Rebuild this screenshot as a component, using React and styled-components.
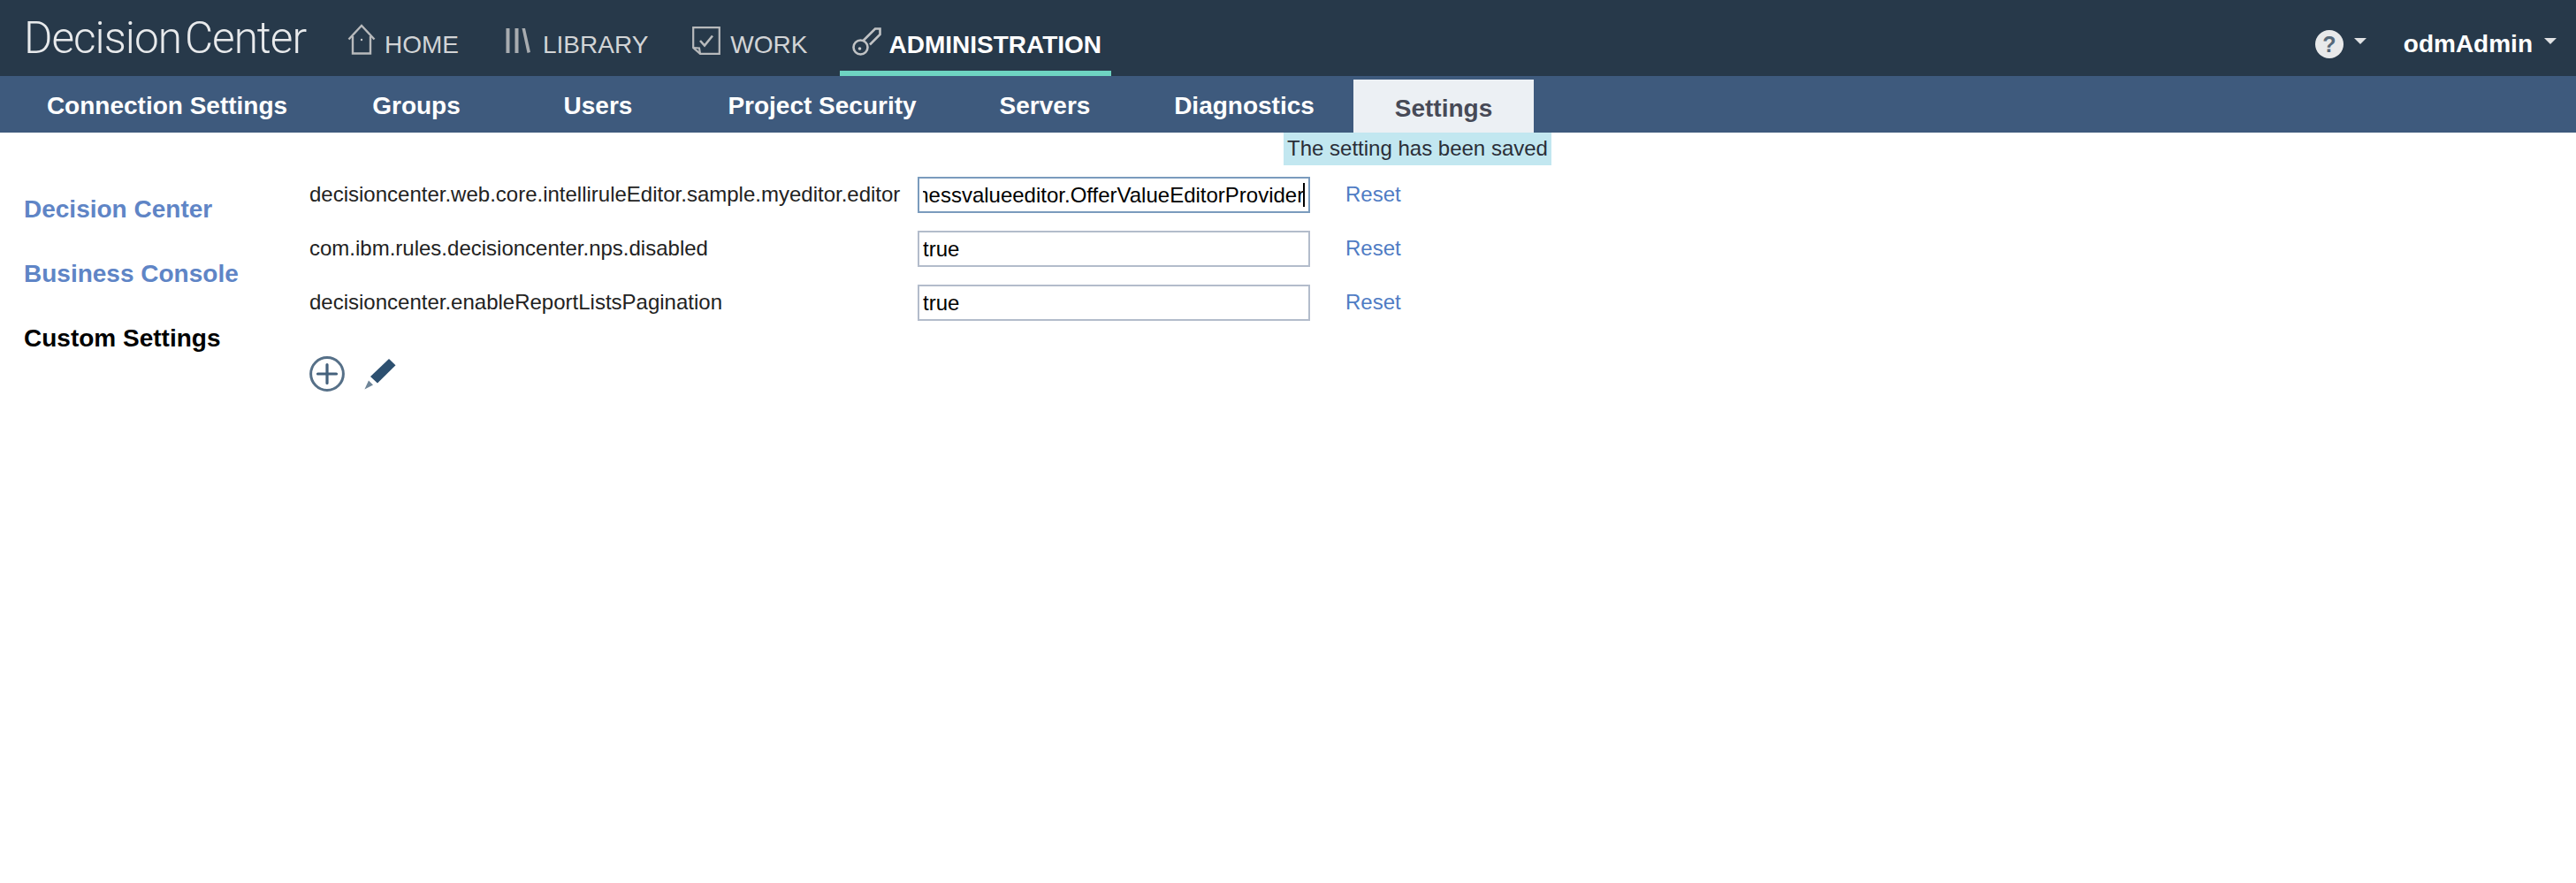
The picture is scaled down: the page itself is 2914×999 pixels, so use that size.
import React, { useEffect, useRef } from "react";
import styled, { createGlobalStyle } from "styled-components";

const Global = createGlobalStyle`
  html, body { margin: 0; padding: 0; background: #fff; }
  body { font-family: "Liberation Sans", Arial, sans-serif; color: #222; }
`;

const Page = styled.div`
  min-height: 999px;
  display: flex;
  flex-direction: column;
`;

const TopBar = styled.header`
  height: 86px;
  background: #27394a;
  display: flex;
  align-items: stretch;
  padding-left: 27px;
  box-sizing: border-box;
`;

const Logo = styled.div`
  width: 352px;
  font-family: "Roboto", "Liberation Sans", sans-serif;
  font-weight: 300;
  font-size: 49.5px;
  letter-spacing: -1px;
  word-spacing: -7px;
  color: #e8eaec;
  line-height: 86px;
  white-space: nowrap;
`;

const MainNav = styled.nav`
  display: flex;
  align-items: stretch;
`;

const NavItem = styled.a`
  display: flex;
  align-items: center;
  gap: ${(p) => p.$gap}px;
  padding: 6px ${(p) => (p.$active ? 11 : 14)}px 0 14px;
  margin-right: ${(p) => p.$mr}px;
  font-size: 28px;
  font-weight: ${(p) => (p.$active ? 700 : 400)};
  color: ${(p) => (p.$active ? "#fff" : "#d2d4d6")};
  border-bottom: 6px solid ${(p) => (p.$active ? "#6ed4c2" : "transparent")};
  box-sizing: border-box;
  white-space: nowrap;
`;

const NavLabel = styled.span`
  position: relative;
  top: 8px;
`;

const IconSvg = styled.svg`
  display: block;
  flex: none;
  position: relative;
  top: ${(p) => p.$top || 0}px;
`;

const UserArea = styled.div`
  margin-left: auto;
  display: flex;
  align-items: center;
  padding: 13px 22px 0 0;
`;

const HelpBadge = styled.span`
  width: 32px;
  height: 32px;
  border-radius: 50%;
  background: #e8e9ea;
  color: #566879;
  font-weight: 700;
  font-size: 25px;
  line-height: 32px;
  text-align: center;
`;

const Caret = styled.span`
  width: 0;
  height: 0;
  margin-left: ${(p) => p.$ml}px;
  border-left: 7px solid transparent;
  border-right: 7px solid transparent;
  border-top: 7px solid #e0e2e4;
  position: relative;
  top: -3px;
`;

const UserName = styled.span`
  margin-left: 42px;
  font-size: 28px;
  font-weight: 700;
  color: #fff;
`;

const SubBar = styled.nav`
  height: 64px;
  background: #3e5a7d;
  display: flex;
  padding-left: 5px;
`;

const Tab = styled.a`
  width: ${(p) => p.$w}px;
  margin-left: ${(p) => p.$ml || 0}px;
  margin-top: ${(p) => (p.$active ? 4 : 0)}px;
  padding-top: ${(p) => (p.$active ? 5 : 4)}px;
  background: ${(p) => (p.$active ? "#ecf0f4" : "transparent")};
  color: ${(p) => (p.$active ? "#474a57" : "#fff")};
  font-size: 28px;
  font-weight: 700;
  text-align: center;
  line-height: ${(p) => (p.$active ? 55 : 60)}px;
  white-space: nowrap;
  height: ${(p) => (p.$active ? 55 : 60)}px;
`;

const Content = styled.main`
  position: relative;
  display: flex;
`;

const Toast = styled.div`
  position: absolute;
  left: 1452px;
  top: 0;
  width: 303px;
  height: 37px;
  background: #c2e7f0;
  color: #2a2e38;
  font-size: 24px;
  line-height: 36px;
  text-align: center;
  white-space: nowrap;
`;

const SideNav = styled.aside`
  width: 350px;
  flex: none;
  padding: 71px 0 0 27px;
  box-sizing: border-box;
  display: flex;
  flex-direction: column;
  gap: 41px;
`;

const SideLink = styled.a`
  font-size: 28px;
  font-weight: 700;
  line-height: 32px;
  color: ${(p) => (p.$active ? "#000" : "#5f85c6")};
`;

const Panel = styled.section`
  padding-top: 50px;
`;

const SettingsGrid = styled.div`
  display: grid;
  grid-template-columns: 688px 444px auto;
  row-gap: 20px;
  align-items: center;
`;

const SettingName = styled.label`
  font-size: 24px;
  color: #222;
  white-space: nowrap;
  position: relative;
  top: -1px;
`;

const ValueWrap = styled.div`
  position: relative;
  width: 444px;
  height: 41px;
`;

const ValueInput = styled.input`
  width: 100%;
  height: 100%;
  box-sizing: border-box;
  border: 2px solid ${(p) => (p.$focused ? "#7a9bbd" : "#b3bccb")};
  outline: none;
  border-radius: 0;
  padding: 0 5px 0 4px;
  margin: 0;
  font-family: "Liberation Sans", Arial, sans-serif;
  font-size: 24px;
  color: #000;
  background: #fff;
  caret-color: transparent;
`;

const CaretMark = styled.span`
  position: absolute;
  left: 436px;
  top: 7px;
  width: 2px;
  height: 27px;
  background: #000;
`;

const ResetLink = styled.a`
  margin-left: 40px;
  font-size: 24px;
  color: #4f7cc4;
  position: relative;
  top: -1px;
`;

const Actions = styled.div`
  display: flex;
  align-items: center;
  gap: 22px;
  margin-top: 40px;
`;

const HomeIcon = () => (
  <IconSvg $top={1} width="32" height="35" viewBox="0 0 32 35" fill="none" stroke="#b8babc" strokeWidth="2.4">
    <path d="M1.5 17.5 16 2l14.5 15.5" />
    <path d="M6 14v19.5h20V14" />
    <circle cx="16" cy="18" r="1.2" fill="#c4c6c8" stroke="none" />
  </IconSvg>
);

const LibraryIcon = () => (
  <IconSvg $top={3} width="28" height="28" viewBox="0 0 28 28" fill="#a8acb0">
    <rect x="0.5" y="0" width="4" height="28" />
    <rect x="10.5" y="0" width="4" height="28" />
    <path d="M18.5 0h3.5l6 27-3.5 1z" />
  </IconSvg>
);

const WorkIcon = () => (
  <IconSvg $top={3} width="32" height="32" viewBox="0 0 32 32" fill="none" stroke="#b8babc" strokeWidth="2.2">
    <path d="M1.2 1.2h29.6v29.6H9L1.2 24z" />
    <path d="M1.2 24 8 24.5 9 30.8" />
    <path d="M9 16l5 5.5 9-11" strokeWidth="2.6" />
  </IconSvg>
);

const KeyIcon = () => (
  <IconSvg $top={3} width="33" height="33" viewBox="0 0 33 33" fill="none" stroke="#c0c2c4" strokeWidth="2.6">
    <path d="M12 16.5 26 2.5H31.5V9L20 20.5" />
    <circle cx="9.5" cy="23.5" r="8" />
    <circle cx="8.5" cy="25" r="1.8" fill="#c8cacc" stroke="none" />
  </IconSvg>
);

const PlusIcon = () => (
  <IconSvg width="40" height="40" viewBox="0 0 40 40" fill="none">
    <circle cx="20" cy="20" r="18.4" stroke="#567088" strokeWidth="3" />
    <path d="M20 9.5v21M9.5 20h21" stroke="#44617c" strokeWidth="3.2" strokeLinecap="round" />
  </IconSvg>
);

const PencilIcon = () => (
  <IconSvg width="36" height="36" viewBox="0 0 36 36">
    <path d="M28 1l7.5 7.2L15 28.5 7 21z" fill="#2d5070" />
    <path d="M5 25.5l5 5L.4 35.6z" fill="#6f8598" />
  </IconSvg>
);

const longValue = "decisioncenter.web.core.businessvalueeditor.OfferValueEditorProvider";

const rows = [
  { name: "decisioncenter.web.core.intelliruleEditor.sample.myeditor.editor", value: longValue, focused: true },
  { name: "com.ibm.rules.decisioncenter.nps.disabled", value: "true" },
  { name: "decisioncenter.enableReportListsPagination", value: "true" },
];

const tabs = [
  { label: "Connection Settings", w: 368 },
  { label: "Groups", w: 196 },
  { label: "Users", w: 215 },
  { label: "Project Security", w: 292 },
  { label: "Servers", w: 212 },
  { label: "Diagnostics", w: 239 },
  { label: "Settings", w: 204, ml: 4, active: true },
];

export default function App() {
  const inputRef = useRef(null);
  useEffect(() => {
    if (inputRef.current) inputRef.current.scrollLeft = inputRef.current.scrollWidth;
  }, []);
  return (
    <Page>
      <Global />
      <TopBar>
        <Logo>Decision Center</Logo>
        <MainNav>
          <NavItem $gap={10} $mr={25}><HomeIcon /><NavLabel>HOME</NavLabel></NavItem>
          <NavItem $gap={14} $mr={22}><LibraryIcon /><NavLabel>LIBRARY</NavLabel></NavItem>
          <NavItem $gap={11} $mr={23}><WorkIcon /><NavLabel>WORK</NavLabel></NavItem>
          <NavItem $gap={8} $mr={0} $active><KeyIcon /><NavLabel>ADMINISTRATION</NavLabel></NavItem>
        </MainNav>
        <UserArea>
          <HelpBadge>?</HelpBadge>
          <Caret $ml={12} />
          <UserName>odmAdmin</UserName>
          <Caret $ml={13} />
        </UserArea>
      </TopBar>
      <SubBar>
        {tabs.map((t) => (
          <Tab key={t.label} $w={t.w} $ml={t.ml} $active={t.active}>{t.label}</Tab>
        ))}
      </SubBar>
      <Content>
        <Toast>The setting has been saved</Toast>
        <SideNav>
          <SideLink>Decision Center</SideLink>
          <SideLink>Business Console</SideLink>
          <SideLink $active>Custom Settings</SideLink>
        </SideNav>
        <Panel>
          <SettingsGrid>
            {rows.map((r) => (
              <React.Fragment key={r.name}>
                <SettingName>{r.name}</SettingName>
                <ValueWrap>
                  <ValueInput
                    ref={r.focused ? inputRef : undefined}
                    $focused={r.focused}
                    defaultValue={r.value}
                  />
                  {r.focused && <CaretMark />}
                </ValueWrap>
                <ResetLink>Reset</ResetLink>
              </React.Fragment>
            ))}
          </SettingsGrid>
          <Actions>
            <PlusIcon />
            <PencilIcon />
          </Actions>
        </Panel>
      </Content>
    </Page>
  );
}
